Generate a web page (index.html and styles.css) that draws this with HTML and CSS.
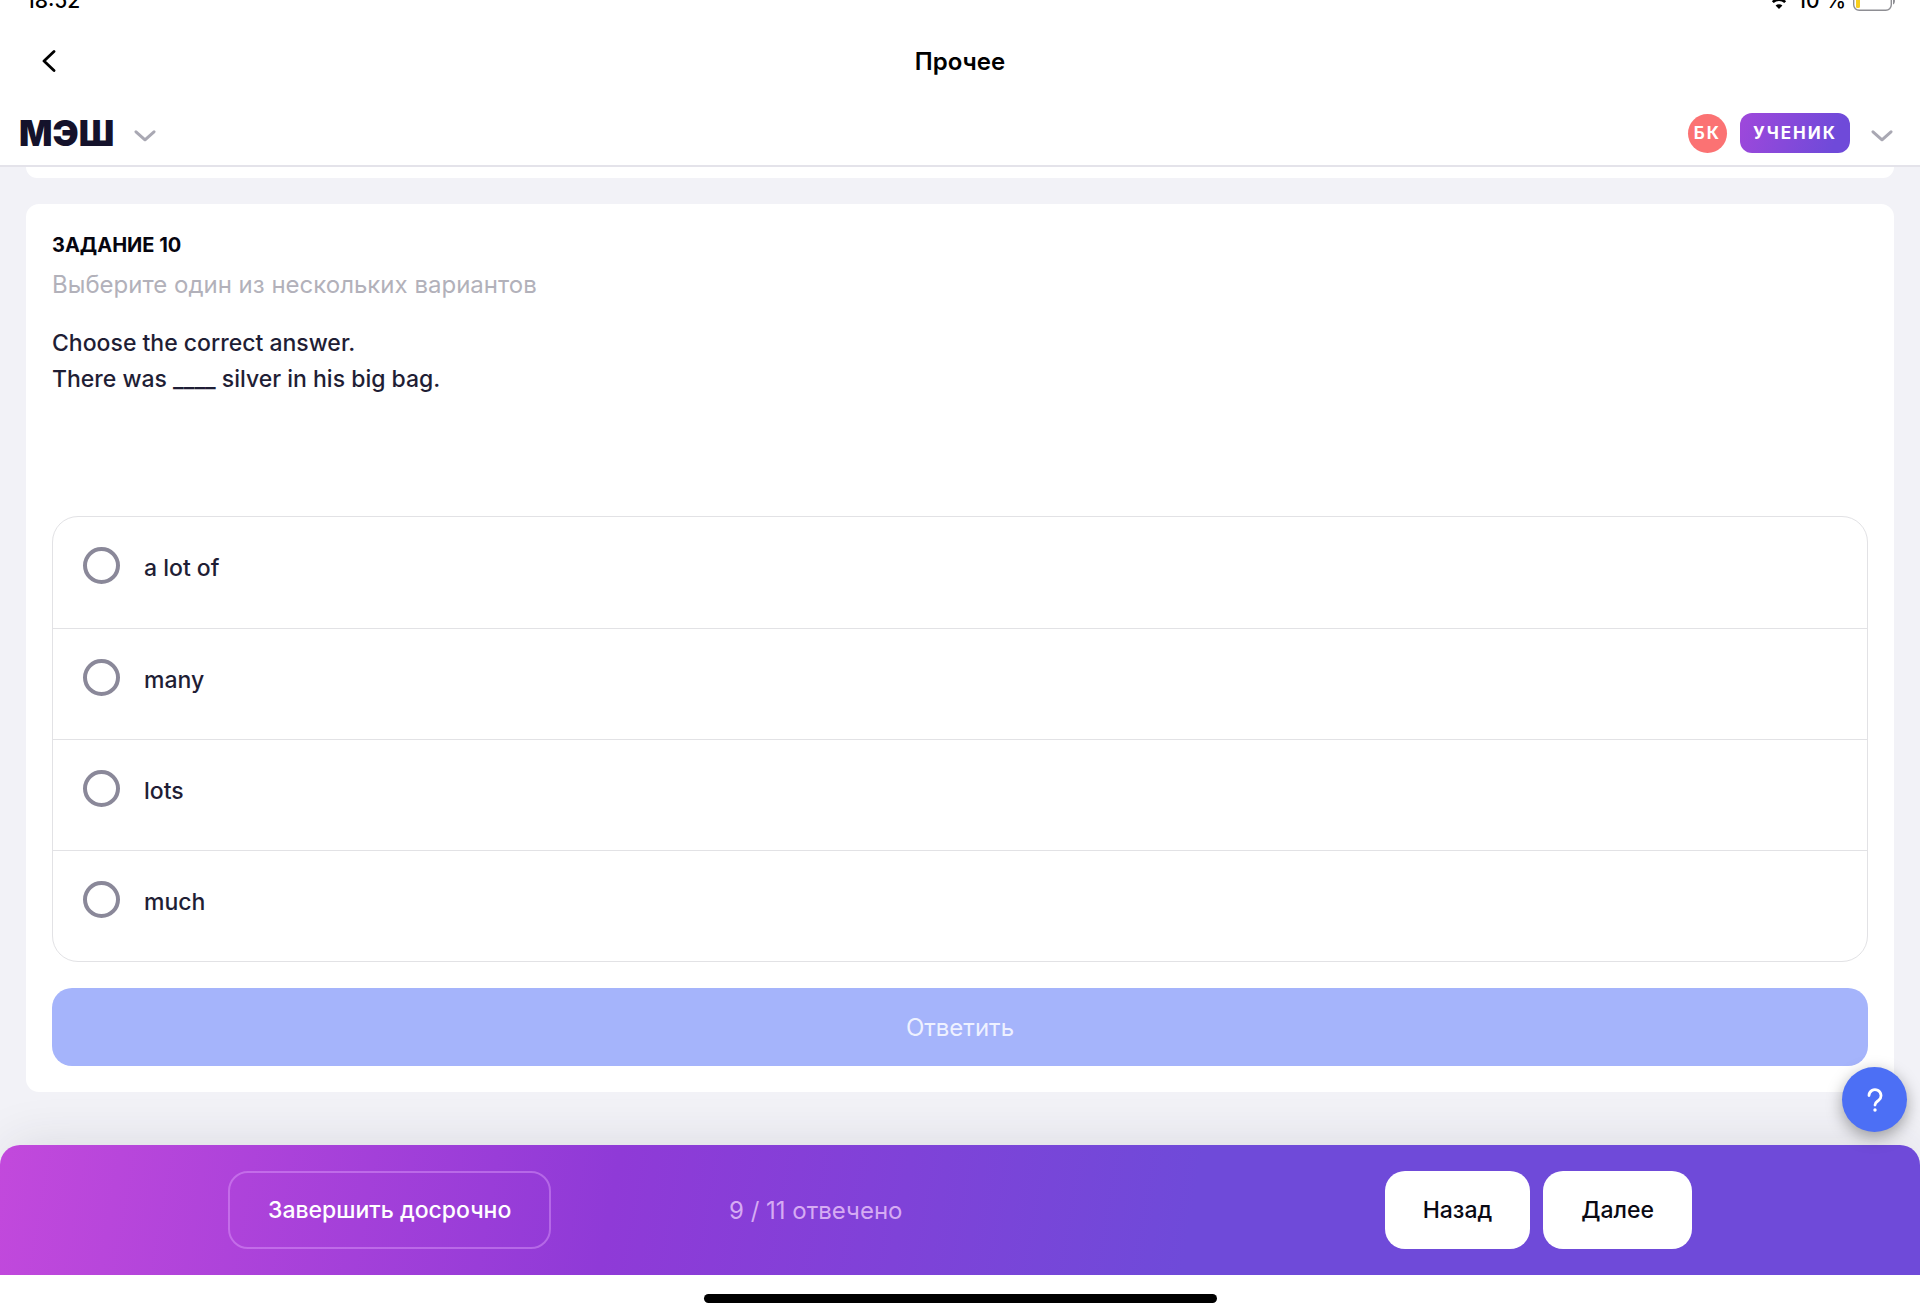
FILE: index.html
```
<!DOCTYPE html>
<html lang="ru">
<head>
    <meta charset="UTF-8">
    <meta name="viewport" content="width=device-width, initial-scale=1.0">
    <title>Прочее</title>
    <link rel="stylesheet" href="styles.css">
</head>
<body>
    <div class="status-bar">
        <span>18:52</span>
        <div class="status-icons">
            <svg class="wifi" viewBox="0 0 22 16" width="22" height="16">
                <path d="M1.5 5.5a13.5 13.5 0 0 1 19 0M4.8 9.2a8.8 8.8 0 0 1 12.4 0" fill="none" stroke="#000" stroke-width="2.6"/>
                <path d="M11 16l-3.4-3.4a4.8 4.8 0 0 1 6.8 0z" fill="#000"/>
            </svg>
            <span>10 %</span>
            <svg class="battery" viewBox="0 0 43 20" width="43" height="20">
                <rect x="0.7" y="0.7" width="37.6" height="18.6" rx="5.5" fill="none" stroke="#8e8e93" stroke-width="1.4"/>
                <rect x="3" y="3" width="4" height="14" rx="1.5" fill="#f7ce1d"/>
                <path d="M40 6.5c2.6 1 2.6 6 0 7z" fill="#8e8e93"/>
            </svg>
        </div>
    </div>

    <nav class="nav-bar">
        <button class="icon-btn back-btn" aria-label="Назад">
            <svg viewBox="0 0 14 22" width="14" height="22">
                <path d="M12 1.5L2 11l10 9.5" fill="none" stroke="#000" stroke-width="2.8" stroke-linecap="round" stroke-linejoin="round"/>
            </svg>
        </button>
        <h1>Прочее</h1>
    </nav>

    <header class="header">
        <div class="header-group">
            <a class="logo" href="#">МЭШ</a>
            <button class="icon-btn" aria-label="Меню">
                <svg viewBox="0 0 22 12" width="22" height="12">
                    <path d="M2 1.8l9 8 9-8" fill="none" stroke="#a9a8b3" stroke-width="3" stroke-linecap="round" stroke-linejoin="round"/>
                </svg>
            </button>
        </div>
        <div class="header-group profile">
            <span class="avatar">БК</span>
            <span class="role">УЧЕНИК</span>
            <button class="icon-btn" aria-label="Профиль">
                <svg viewBox="0 0 22 12" width="22" height="12">
                    <path d="M2 1.8l9 8 9-8" fill="none" stroke="#a9a8b3" stroke-width="3" stroke-linecap="round" stroke-linejoin="round"/>
                </svg>
            </button>
        </div>
    </header>

    <main class="content">
        <section class="card card-prev"></section>
        <form class="card task">
            <h2>ЗАДАНИЕ 10</h2>
            <p class="hint">Выберите один из нескольких вариантов</p>
            <p class="question">Choose the correct answer.<br>There was ____ silver in his big bag.</p>
            <div class="options">
                <label class="option"><input type="radio" name="answer"><span>a lot of</span></label>
                <label class="option"><input type="radio" name="answer"><span>many</span></label>
                <label class="option"><input type="radio" name="answer"><span>lots</span></label>
                <label class="option"><input type="radio" name="answer"><span>much</span></label>
            </div>
            <button class="submit" type="button" disabled>Ответить</button>
        </form>
    </main>

    <footer class="footer">
        <button class="btn btn-outline">Завершить досрочно</button>
        <span class="progress">9 / 11 отвечено</span>
        <div class="footer-nav">
            <button class="btn">Назад</button>
            <button class="btn">Далее</button>
        </div>
        <button class="help" aria-label="Помощь">
            <svg viewBox="0 0 16 24" width="16" height="24">
                <path d="M2 7.6a6 6 0 1 1 9.6 4.8C9.4 14 8 14.6 8 17" fill="none" stroke="#fff" stroke-width="2.8" stroke-linecap="round"/>
                <circle cx="8" cy="22" r="1.7" fill="#fff"/>
            </svg>
        </button>
    </footer>
    <div class="home-area">
        <div class="home-indicator"></div>
    </div>
</body>
</html>
```
FILE: styles.css
```
:root {
    --page-bg: #f2f2f7;
    --text: #1f1e35;
    --line: #e2e2e5;
    --radius: 20px;
    --gap: 26px;
}

* {
    margin: 0;
    padding: 0;
    box-sizing: border-box;
}

body {
    font-family: Inter, 'Noto Sans', sans-serif;
    font-size: 23px;
    background: var(--page-bg);
    color: var(--text);
    height: 100vh;
    display: flex;
    flex-direction: column;
    overflow: hidden;
}

button {
    font: inherit;
    border: none;
    cursor: pointer;
}

svg {
    display: block;
}

.icon-btn {
    background: none;
}

.status-bar {
    height: 23px;
    padding: 0 24px 0 26px;
    background: #fff;
    display: flex;
    justify-content: space-between;
    align-items: flex-start;
    font-size: 21px;
    line-height: 28px;
    font-weight: 500;
    color: #000;
}

.status-bar > * {
    margin-top: -13px;
}

.status-icons {
    display: flex;
    align-items: center;
    gap: 7px;
}

.nav-bar {
    height: 76px;
    padding: 0 42px;
    background: #fff;
    display: grid;
    grid-template-columns: 1fr auto 1fr;
    align-items: center;
    color: #000;
}

.back-btn {
    justify-self: start;
}

.nav-bar h1 {
    font-size: 24px;
    font-weight: 600;
}

.header {
    height: 68px;
    padding: 2px 27px 0 19px;
    background: #fff;
    border-bottom: 2px solid #e4e3ea;
    display: flex;
    justify-content: space-between;
    align-items: center;
}

.header-group {
    display: flex;
    align-items: center;
    gap: 20px;
}

.logo {
    font-size: 35px;
    line-height: 36px;
    font-weight: 900;
    color: #14122b;
    text-decoration: none;
}

.header-group .icon-btn {
    padding-top: 6px;
}

.profile {
    font-weight: 700;
    color: #fff;
    gap: 13px;
}

.profile .icon-btn {
    margin-left: 8px;
}

.avatar {
    width: 39px;
    height: 39px;
    border-radius: 50%;
    background: #fb7273;
    font-size: 17px;
    letter-spacing: 2px;
    line-height: 38px;
    text-align: center;
}

.role {
    padding: 0 13px;
    border-radius: 12px;
    background: linear-gradient(110deg, #9f48db, #6f4ad9 85%);
    font-size: 17px;
    letter-spacing: 2px;
    line-height: 40px;
}

.content {
    flex: 1;
    min-height: 0;
    padding: 0 var(--gap);
}

.card {
    background: #fff;
    border-radius: 13px;
}

.card-prev {
    height: 11px;
    margin-bottom: 26px;
    border-radius: 0 0 13px 13px;
}

.task {
    padding: var(--gap);
}

.task h2 {
    font-size: 20px;
    line-height: 30px;
    font-weight: 700;
    color: #06050f;
}

.hint {
    margin-top: 7px;
    font-size: 24px;
    line-height: 36px;
    color: #b2b1ba;
}

.question {
    margin-top: 22px;
    min-height: 191px;
    line-height: 36px;
    font-weight: 500;
}

.options {
    border: 1px solid var(--line);
    border-radius: 26px;
}

.option {
    display: flex;
    gap: 24px;
    height: 111px;
    padding: 30px;
    line-height: 42px;
    font-weight: 500;
}

.option + .option {
    border-top: 1px solid var(--line);
}

.option input {
    appearance: none;
    width: 37px;
    height: 37px;
    border: 4px solid #8a8899;
    border-radius: 50%;
}

.submit {
    display: block;
    width: 100%;
    height: 78px;
    margin-top: var(--gap);
    border-radius: var(--radius);
    background: #a5b4fb;
    font-size: 24px;
    color: #eef1ff;
}

.footer {
    position: relative;
    padding: 26px 228px;
    display: grid;
    grid-template-columns: repeat(3, 1fr);
    gap: 39px;
    align-items: center;
    border-radius: var(--radius) var(--radius) 0 0;
    background: linear-gradient(100deg, #c249dc, #8f3ad7 32%, #6f4ad9 62%);
    box-shadow: 0 -8px 52px -8px rgba(40, 40, 60, 0.12);
}

.btn {
    height: 78px;
    padding: 0 38px;
    border-radius: var(--radius);
    background: #fff;
    color: #0a0914;
    font-weight: 500;
}

.btn-outline {
    justify-self: start;
    border: 2px solid rgba(230, 170, 255, 0.4);
    background: none;
    color: #fff;
}

.progress {
    font-size: 24px;
    color: #d6abf3;
}

.footer-nav {
    display: flex;
    justify-content: flex-end;
    gap: 13px;
}

/* floats above the footer's right corner */
.help {
    position: absolute;
    right: 13px;
    bottom: 143px;
    width: 65px;
    height: 65px;
    border-radius: 50%;
    background: #4c6ff5;
    box-shadow: 0 5px 16px rgba(0, 0, 0, 0.35);
    display: flex;
    align-items: center;
    justify-content: center;
}

.home-area {
    position: relative;
    height: 40px;
    padding-top: 19px;
    background: #fff;
}

.home-indicator {
    width: 513px;
    height: 9px;
    margin: 0 auto;
    border-radius: 5px;
    background: #000;
}
```
